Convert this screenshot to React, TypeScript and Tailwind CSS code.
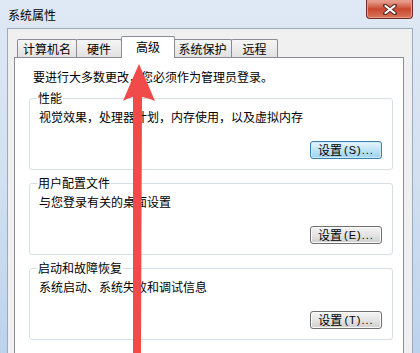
function CloseButton() {
  return (
    <div className="relative flex h-[19px] w-[47px] items-center justify-center rounded-b-[4px] border border-t-0 border-[#6b2f28] bg-linear-to-b from-[#e9aa9c] via-[#c9462f] to-[#d8765c] shadow-[inset_0_0_0_1px_#e79a88]">
      <svg width="14" height="11" viewBox="0 0 14 11">
        <path d="M2 1.5 L12 9.5 M12 1.5 L2 9.5" stroke="#5a2a24" strokeWidth="4" strokeLinecap="round" />
        <path d="M2.5 2 L11.5 9 M11.5 2 L2.5 9" stroke="#ffffff" strokeWidth="2.2" strokeLinecap="round" />
      </svg>
    </div>
  );
}

function SettingButton({ k, primary }: { k: string; primary?: boolean }) {
  return (
    <button
      className={
        primary
          ? "flex h-[18px] w-[72px] items-center justify-center rounded-[3px] border border-[#3c7fb1] bg-linear-to-b from-[#e8f6fd] via-[#bfe4f7] to-[#9bd2ef] shadow-[inset_0_0_0_1px_#c9ecfb]"
          : "flex h-[18px] w-[72px] items-center justify-center rounded-[3px] border border-[#707070] bg-linear-to-b from-[#f4f4f4] via-[#e4e4e4] to-[#cfcfcf] shadow-[inset_0_0_0_1px_#fafafa]"
      }
    >
      <span>设置</span>
      <span className="ml-[2px] font-['Liberation_Sans',sans-serif] text-[11px] tracking-[1px]">({k})...</span>
    </button>
  );
}

function Group({ title, desc, k, primary, first }: { title: string; desc: string; k: string; primary?: boolean; first?: boolean }) {
  return (
    <fieldset
      className={
        first
          ? "mt-[7px] rounded-[3px] border border-[#d5dfe5] pl-[9px] pr-[10px] pt-[5px] pb-[10px]"
          : "mt-[6px] rounded-[3px] border border-[#d5dfe5] pl-[9px] pr-[10px] pt-[5px] pb-[10px]"
      }
    >
      <legend className="-ml-[2px] px-[1px]">{title}</legend>
      <p>{desc}</p>
      <div className="mt-[17px] flex justify-end">
        <SettingButton k={k} primary={primary} />
      </div>
    </fieldset>
  );
}

function Arrow() {
  return (
    <svg className="pointer-events-none absolute left-0 top-0" width="420" height="353" viewBox="0 0 420 353">
      <path
        d="M139 64 Q147 82 155 101 Q148 98 142 97 L141 353 L133 353 L133 97 Q128 98 123 101 Q131 82 139 64 Z"
        fill="#f04a4a"
      />
    </svg>
  );
}

export default function App() {
  const tabBase =
    "flex h-[18px] items-center justify-center rounded-t-[2px] border border-b-0 border-[#898c95] bg-linear-to-b from-[#f6f6f6] to-[#e1e1e1]";

  return (
    <div className="relative h-[353px] w-[420px] overflow-hidden bg-linear-to-b from-[#dfe9f5] via-[#d2e0f0] to-[#bcd3ee] font-['Noto_Sans_CJK_SC',sans-serif] text-[12px] leading-[14px] text-black">
      <div className="flex h-[28px] items-start justify-between pl-[8px] pr-[7px]">
        <span className="mt-[8px]">系统属性</span>
        <CloseButton />
      </div>

      <div className="mx-[7px] h-[325px] border border-b-0 border-[#9caabd] bg-[#f0f0f0] pl-[6px] pr-[8px] pt-[7px]">
        <div className="flex items-end pl-[3px]">
          <div className={`${tabBase} w-[60px]`}>计算机名</div>
          <div className={`${tabBase} -ml-px w-[46px]`}>硬件</div>
          <div className="relative z-10 -mb-px -ml-px flex h-[22px] w-[54px] items-start justify-center rounded-t-[2px] border border-b-0 border-[#898c95] bg-white pt-[3px]">
            高级
          </div>
          <div className={`${tabBase} -ml-[2px] w-[59px]`}>系统保护</div>
          <div className={`${tabBase} -ml-px w-[47px]`}>远程</div>
        </div>

        <div className="h-[300px] border border-[#898c95] bg-white pl-[14px] pr-[10px] pt-[12px]">
          <p className="pl-[4px]">要进行大多数更改，您必须作为管理员登录。</p>
          <Group first title="性能" desc="视觉效果，处理器计划，内存使用，以及虚拟内存" k="S" primary />
          <Group title="用户配置文件" desc="与您登录有关的桌面设置" k="E" />
          <Group title="启动和故障恢复" desc="系统启动、系统失败和调试信息" k="T" />
        </div>
      </div>

      <Arrow />
    </div>
  );
}
